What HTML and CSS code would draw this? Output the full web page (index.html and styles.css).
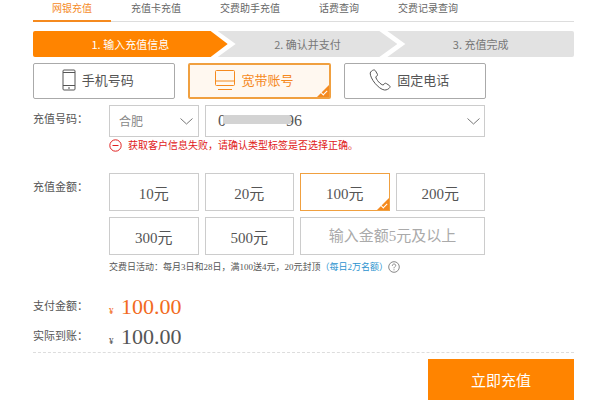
FILE: index.html
```html
<!DOCTYPE html>
<html lang="zh-CN">
<head>
  <meta charset="UTF-8">
  <meta name="viewport" content="width=device-width,initial-scale=1.0">
  <title>网银充值</title>
  <link rel="stylesheet" href="styles.css">
</head>
<body>

<nav class="tabs">
  <a href="#" class="active">网银充值</a>
  <a href="#">充值卡充值</a>
  <a href="#">交费助手充值</a>
  <a href="#">话费查询</a>
  <a href="#">交费记录查询</a>
</nav>

<ol class="steps">
  <li class="current">1. 输入充值信息</li>
  <li>2. 确认并支付</li>
  <li>3. 充值完成</li>
</ol>

<!-- Account type -->
<div class="types">
  <button type="button" class="type">
    <svg width="14" height="22" viewBox="0 0 14 22"><rect x="1" y="1" width="12" height="20" rx="1"/><path d="M1 3.5h12M1 16.5h12M6 19h2"/></svg>
    手机号码
  </button>
  <button type="button" class="type checked">
    <svg width="22" height="22" viewBox="0 0 22 22"><rect x="1.5" y="1.5" width="19" height="15" rx="1"/><path d="M1.5 12h19M4 20.5h14"/></svg>
    宽带账号
  </button>
  <button type="button" class="type">
    <svg width="22" height="22" viewBox="0 0 22 22"><path d="M4.5 1C3.200 1.300 1.600 2.600 1.200 4C1 9.500 9.500 20.300 15.500 21C17.500 21.200 19.800 20 20.800 18.500C21.300 17.700 21 17 20.300 16.500L17.300 14.500C16.500 14 15.600 14.200 15.100 14.900L14.300 16C11.800 16 6.900 10.500 6.800 7.800L7.900 7C8.600 6.500 8.700 5.800 8.300 5L6.500 1.900C6 1.100 5.300 .8 4.500 1Z"/></svg>
    固定电话
  </button>
</div>

<form class="form" id="recharge">
  <label for="number">充值号码：</label>
  <div class="field">
    <div class="account">
      <select aria-label="城市"><option>合肥</option></select>
      <div class="number">
        <input type="text" id="number" value="0               96">
        <span class="mask"></span>
        <svg class="arrow" width="13" height="7" viewBox="0 0 13 7"><path d="M.5 .5L6.500 6L12.500 .5"/></svg>
      </div>
    </div>
    <p class="error">
      <svg width="13" height="13" viewBox="0 0 13 13"><circle cx="6.500" cy="6.500" r="5.700"/><path d="M3.500 6.500h6"/></svg>
      获取客户信息失败，请确认类型标签是否选择正确。
    </p>
  </div>

  <label for="other">充值金额：</label>
  <div class="field">
    <div class="amounts">
      <button type="button">10元</button>
      <button type="button">20元</button>
      <button type="button" class="checked">100元</button>
      <button type="button">200元</button>
      <button type="button">300元</button>
      <button type="button">500元</button>
      <input type="text" id="other" placeholder="输入金额5元及以上">
    </div>
    <p class="tip">
      交费日活动：每月3日和28日，满100送4元，20元封顶<a href="#">（每日2万名额）</a>
      <svg width="12" height="12" viewBox="0 0 12 12"><circle cx="6" cy="6" r="5.300"/><path d="M4.300 4.800C4.300 2.400 7.800 2.500 7.700 4.600C7.600 5.800 6 5.800 6 7.300M6 8.300v1"/></svg>
    </p>
  </div>

  <span class="name">支付金额：</span>
  <div class="sum pay"><small>¥</small>100.00</div>

  <span class="name">实际到账：</span>
  <div class="sum"><small>¥</small>100.00</div>
</form>

<div class="actions">
  <button type="submit" class="submit" form="recharge">立即充值</button>
</div>

</body>
</html>
```

FILE: styles.css
```css
* { box-sizing: border-box; }
body { margin: 0; padding: 0 26px 0 33px; background: #fff; color: #555;
  font: 11px/16px "Noto Sans CJK SC", sans-serif; }
button, input, select { font: inherit; color: inherit; margin: 0; }
button { cursor: pointer; }
svg { fill: none; stroke: currentColor; flex: none; }

/* Tabs */
.tabs { display: flex; gap: 1px; border-bottom: 1px solid #ddd; }
.tabs a { padding: 0 19px 4px; color: #666; font-size: 10px; text-decoration: none;
  border-bottom: 2px solid transparent; margin-bottom: -1px; }
.tabs a.active { color: #f58a1f; border-bottom-color: #f58a1f; }

/* Steps */
.steps { display: flex; list-style: none; margin: 9px 0 6px; padding: 0;
  border-radius: 2px; overflow: hidden; }
.steps li { flex: 180; height: 26px; line-height: 26px; text-align: center; background: #e2e2e2; color: #777;
  margin-left: -10px; clip-path: polygon(0 0, calc(100% - 18px) 0, 100% 50%, calc(100% - 18px) 100%, 0 100%, 18px 50%); }
.steps .current { flex: 195; margin-left: 0; background: #ff8400; color: #fff;
  clip-path: polygon(0 0, calc(100% - 17px) 0, 100% 50%, calc(100% - 17px) 100%, 0 100%); }
.steps li:last-child { flex: 187; clip-path: polygon(0 0, 100% 0, 100% 100%, 0 100%, 18px 50%); }

/* Account type */
.types { display: flex; gap: 13px; margin-right: 88px; }
.type { position: relative; flex: 1; height: 36px; display: flex; align-items: center; justify-content: center;
  gap: 6px; padding: 0 12px 2px 0; background: #fff; border: 1px solid #aaa; border-radius: 2px; font-size: 13px; }
.type.checked { background: #fff8f0; border: 2px solid #f0a040; color: #f58a1f; }

/* Orange corner with a tick */
.checked::before { content: ""; position: absolute; right: 0; bottom: 0;
  border: 6px solid; border-color: transparent #f58a1f #f58a1f transparent; }
.checked::after { content: ""; position: absolute; right: 2px; bottom: 3px; width: 5px; height: 3px;
  border: solid #fff; border-width: 0 0 1px 1px; transform: rotate(-45deg); }

/* Form */
.form { display: grid; grid-template-columns: 76px 1fr; margin-top: 6px; }
.form label, .name { padding-top: 5px; }
.field { margin-right: 89px; }
.account { display: grid; grid-template-columns: 90px 1fr; gap: 6px; }
.account select, .account input { width: 100%; height: 32px; padding: 0 9px; background: #fff;
  border: 1px solid #ccc; border-radius: 0; }
.account select { appearance: none; color: #888; font-size: 12px;
  background: url("data:image/svg+xml,%3Csvg xmlns='http://www.w3.org/2000/svg' width='13' height='7' fill='none' stroke='%23777'%3E%3Cpath d='M.5 .5L6.500 6L12.500 .5'/%3E%3C/svg%3E") no-repeat right 5px center; }
.number { position: relative; }
.account input { padding: 0 12px; font-family: "Liberation Serif", serif; font-size: 16px; }
.mask { position: absolute; left: 18px; top: 10px; width: 68px; height: 9px; background: #d3d3d3; border-radius: 2px; }
.arrow { position: absolute; right: 5px; top: 13px; color: #777; }
.error { display: flex; align-items: center; gap: 6px; margin: 0 0 20px; color: #e02020; font-size: 10px; }

.amounts { display: grid; grid-template-columns: repeat(4, 1fr); gap: 6px; }
.amounts button, .amounts input { position: relative; width: 100%; height: 38px; padding: 0; background: #fff;
  border: 1px solid #ccc; text-align: center; font: 15px "Liberation Serif", "Noto Sans CJK SC", serif; }
.amounts input { grid-column: span 2; }
.amounts input::placeholder { color: #aaa; }
.amounts .checked { border-color: #f0a040; }
.tip { display: flex; align-items: center; margin: 4px 0 17px; font: 9px/16px "Liberation Serif", "Noto Sans CJK SC", serif; }
.tip a { color: #2b93cf; text-decoration: none; }
.tip svg { color: #888; }

.sum { height: 30px; font: 22px/30px "Liberation Serif", serif; }
.sum small { display: inline-block; width: 12px; font-size: 9px; }
.pay { color: #f26a21; }

/* Submit */
.actions { display: flex; justify-content: flex-end; border-top: 1px dashed #ddd; padding-top: 6px; }
.submit { width: 146px; height: 41px; border: 0; background: #ff8400; color: #fff; font-size: 15px; }
```
